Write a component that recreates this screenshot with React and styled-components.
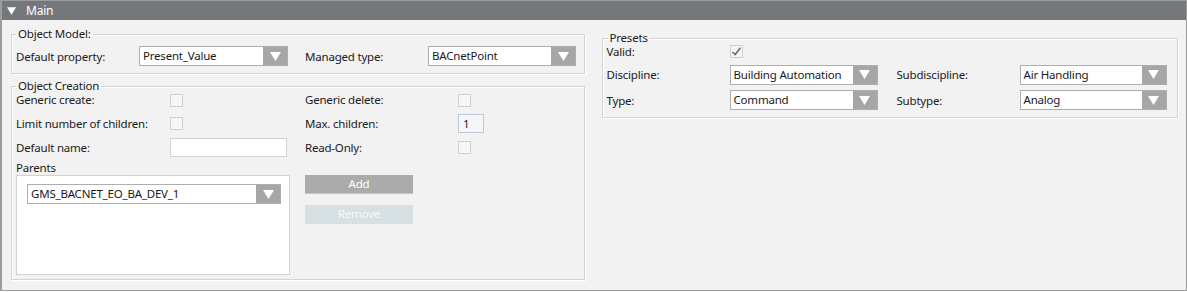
import React from 'react';
import styled, { createGlobalStyle } from 'styled-components';

const GlobalStyle = createGlobalStyle`
  html, body {
    margin: 0;
    padding: 0;
    background: #ffffff;
  }
  body {
    font-family: 'Noto Sans', 'Open Sans', sans-serif;
    font-size: 11.5px;
    letter-spacing: -0.2px;
    color: #202020;
  }
  * {
    box-sizing: border-box;
  }
`;

const DownArrow = ({ w = 11, h = 9 }) => (
  <svg width={w} height={h} viewBox="0 0 11 9">
    <polygon points="0,0 11,0 5.5,9" fill="#ffffff" />
  </svg>
);

const Combo = ({ value, width }) => (
  <ComboBox $width={width}>
    <ComboValue>{value}</ComboValue>
    <ComboButton>
      <DownArrow />
    </ComboButton>
  </ComboBox>
);

const CheckMark = () => (
  <svg width="11" height="11" viewBox="0 0 11 11">
    <path d="M1.5 6 L4.2 8.6 L9.5 1.8" fill="none" stroke="#6e6e6e" strokeWidth="1.6" />
  </svg>
);

const App = () => {
  return (
    <>
      <GlobalStyle />
      <Frame>
        <Header>
          <DownArrow w={9} h={8} />
          <HeaderTitle>Main</HeaderTitle>
        </Header>
        <Body>
          <LeftColumn>
            <Group>
              <Legend>Object Model:</Legend>
              <ModelGrid>
                <Label>Default property:</Label>
                <Combo value="Present_Value" width={149} />
                <Label>Managed type:</Label>
                <Combo value="BACnetPoint" width={148} />
              </ModelGrid>
            </Group>
            <Group $top={4}>
              <Legend>Object Creation</Legend>
              <CreationGrid>
                <Label>Generic create:</Label>
                <Cell>
                  <CheckBox />
                </Cell>
                <Label>Generic delete:</Label>
                <Cell>
                  <CheckBox />
                </Cell>

                <Label>Limit number of children:</Label>
                <Cell>
                  <CheckBox />
                </Cell>
                <Label>Max. children:</Label>
                <Cell>
                  <NumberBox>1</NumberBox>
                </Cell>

                <Label>Default name:</Label>
                <Cell>
                  <TextBox />
                </Cell>
                <Label>Read-Only:</Label>
                <Cell>
                  <CheckBox />
                </Cell>

                <ParentsLabel>Parents</ParentsLabel>
                <ListBox>
                  <Combo value="GMS_BACNET_EO_BA_DEV_1" width={254} />
                </ListBox>
                <Buttons>
                  <Button>Add</Button>
                  <Button $disabled>Remove</Button>
                </Buttons>
              </CreationGrid>
            </Group>
          </LeftColumn>
          <RightColumn>
            <Group $right>
              <Legend $shift={1}>Presets</Legend>
              <PresetsGrid>
                <Label>Valid:</Label>
                <Cell>
                  <CheckBox $checked>
                    <CheckMark />
                  </CheckBox>
                </Cell>
                <span />
                <span />

                <Label>Discipline:</Label>
                <Combo value="Building Automation" width={148} />
                <Label>Subdiscipline:</Label>
                <Combo value="Air Handling" width={147} />

                <Label>Type:</Label>
                <Combo value="Command" width={148} />
                <Label>Subtype:</Label>
                <Combo value="Analog" width={147} />
              </PresetsGrid>
            </Group>
          </RightColumn>
        </Body>
      </Frame>
    </>
  );
};

export default App;

const Frame = styled.div`
  width: 1187px;
  height: 291px;
  border: 1px solid #9c9c9c;
  border-left-width: 2px;
  background: #f2f2f2;
  display: flex;
  flex-direction: column;
`;

const Header = styled.div`
  height: 19px;
  background: #75787b;
  color: #ffffff;
  display: flex;
  align-items: center;
  gap: 10px;
  padding-left: 5px;
  font-size: 12px;
`;

const HeaderTitle = styled.span`
  line-height: 19px;
`;

const Body = styled.div`
  flex: 1;
  display: flex;
  flex-direction: row;
  gap: 17px;
  padding: 6px 8px 0 9px;
`;

const LeftColumn = styled.div`
  width: 574px;
  display: flex;
  flex-direction: column;
`;

const RightColumn = styled.div`
  width: 577px;
  padding-top: 4px;
`;

const Group = styled.fieldset`
  margin: ${(p) => p.$top || 0}px 0 0 0;
  padding: 0 ${(p) => (p.$right ? 9 : 6)}px 7px 4px;
  border: 1px solid #d4d4d4;
  box-shadow: inset 1px 1px 0 #ffffff, 1px 1px 0 #ffffff;
  min-width: 0;
`;

const Legend = styled.legend`
  padding: 0 2px;
  margin-left: ${(p) => p.$shift || 0}px;
  line-height: 16px;
  font-size: 11.5px;
  color: #202020;
`;

const ModelGrid = styled.div`
  display: grid;
  grid-template-columns: 123px 166px 123px 148px;
  grid-template-rows: 20px;
  align-items: center;
  margin-top: 4px;
`;

const CreationGrid = styled.div`
  display: grid;
  grid-template-columns: 154px 135px 153px 1fr;
  grid-template-rows: 23px 24px 24px 16px 100px;
  align-items: center;
  margin-top: -6px;
  margin-bottom: -3px;
`;

const PresetsGrid = styled.div`
  display: grid;
  grid-template-columns: 123px 167px 123px 147px;
  grid-template-rows: 22px 25px 26px;
  align-items: center;
  margin-top: -6px;
  margin-bottom: -3px;
`;

const Label = styled.span`
  white-space: nowrap;
  line-height: 16px;
  padding-top: 1px;
`;

const ParentsLabel = styled(Label)`
  grid-column: 1 / 5;
`;

const Cell = styled.div`
  display: flex;
  align-items: center;
`;

const ComboBox = styled.div`
  width: ${(p) => p.$width}px;
  height: 20px;
  display: flex;
  background: #ffffff;
  border: 1px solid #aeaeae;
`;

const ComboValue = styled.span`
  flex: 1;
  padding-left: 3px;
  line-height: 17px;
  white-space: nowrap;
  overflow: hidden;
  color: #1a1a1a;
`;

const ComboButton = styled.div`
  width: 24px;
  background: #a4a6a8;
  display: flex;
  align-items: center;
  justify-content: center;
`;

const CheckBox = styled.div`
  width: 13px;
  height: 13px;
  border: 1px solid #cfcfcf;
  background: ${(p) => (p.$checked ? '#f4f4f4' : '#f6f6f6')};
  display: flex;
  align-items: center;
  justify-content: center;
  margin-top: ${(p) => (p.$checked ? 0 : 1)}px;
`;

const TextBox = styled.div`
  width: 117px;
  height: 19px;
  background: #ffffff;
  border: 1px solid #d3d3d3;
`;

const NumberBox = styled.div`
  width: 26px;
  height: 19px;
  background: #f6f6f6;
  border: 1px solid #b8cadb;
  padding-left: 4px;
  line-height: 17px;
`;

const ListBox = styled.div`
  grid-column: 1 / 3;
  align-self: stretch;
  width: 274px;
  background: #ffffff;
  border: 1px solid #d3d3d3;
  padding: 8px 0 0 10px;
`;

const Buttons = styled.div`
  align-self: start;
  display: flex;
  flex-direction: column;
  gap: 11px;
`;

const Button = styled.div`
  width: 108px;
  height: 19px;
  background: ${(p) => (p.$disabled ? '#d7e0e3' : '#ababab')};
  color: ${(p) => (p.$disabled ? '#f7f9fa' : '#ffffff')};
  border-bottom: 1px solid ${(p) => (p.$disabled ? '#d7e0e3' : '#c4c4c4')};
  text-align: center;
  line-height: 18px;
`;
